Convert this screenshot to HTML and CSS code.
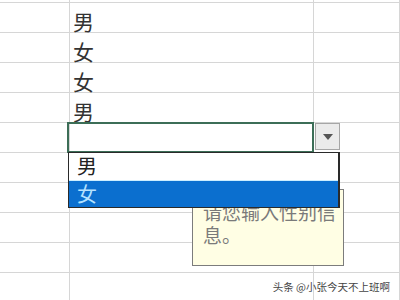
FILE: index.html
```html
<!DOCTYPE html>
<html lang="zh-CN">
  <head>
    <meta charset="UTF-8" />
    <meta name="viewport" content="width=device-width, initial-scale=1.0" />
    <title>数据验证</title>
    <link rel="stylesheet" href="styles.css">
  </head>

  <body>
    <div class="sheet">
      <div class="cell"></div><div class="cell"></div><div class="cell"></div>
      <div class="cell"></div><div class="cell">男</div><div class="cell"></div>
      <div class="cell"></div><div class="cell">女</div><div class="cell"></div>
      <div class="cell"></div><div class="cell">女</div><div class="cell"></div>
      <div class="cell"></div><div class="cell">男</div><div class="cell"></div>
      <div class="cell"></div>
      <div class="cell active">
        <div class="drop-btn"><span class="arrow"></span></div>
        <ul class="drop-list">
          <li>男</li>
          <li class="selected">女</li>
        </ul>
        <div class="tip">请您输入性别信息。</div>
      </div>
      <div class="cell"></div>
      <div class="cell"></div><div class="cell"></div><div class="cell"></div>
      <div class="cell"></div><div class="cell"></div><div class="cell"></div>
      <div class="cell"></div><div class="cell"></div><div class="cell"></div>
      <div class="cell"></div><div class="cell"></div><div class="cell"></div>
      <div class="cell"></div><div class="cell"></div><div class="cell"></div>
    </div>

    <div class="watermark">头条 @小张今天不上班啊</div>
  </body>
</html>
```

FILE: styles.css
```css
body {
  margin: 0;
  background-color: #fff;
  font-family: "Noto Sans CJK SC", "Noto Sans", sans-serif;
  overflow: hidden;
  height: 300px;
  position: relative;
}

.sheet {
  display: grid;
  grid-template-columns: 70px 244px 1fr;
  grid-auto-rows: 30px;
  margin-top: -27px;
}

.cell {
  box-sizing: border-box;
  border-right: 1px solid #d6d6d6;
  border-bottom: 1px solid #d6d6d6;
  display: flex;
  align-items: flex-end;
  padding-left: 3px;
  font-size: 21px;
  line-height: 22px;
  color: #333;
}

.active {
  position: relative;
}

.active::after {
  content: "";
  position: absolute;
  left: -3px;
  top: -1px;
  right: -1px;
  bottom: -1px;
  border: 2px solid #3c6e57;
}

.drop-btn {
  position: absolute;
  left: calc(100% + 2px);
  top: 0;
  width: 25px;
  height: 27px;
  box-sizing: border-box;
  background-color: #ebebeb;
  border: 1px solid #a6a6a6;
  display: flex;
  align-items: center;
  justify-content: center;
}

.arrow {
  width: 0;
  height: 0;
  border-left: 5px solid transparent;
  border-right: 5px solid transparent;
  border-top: 6px solid #555;
}

.drop-list {
  position: absolute;
  left: -2px;
  top: 29px;
  width: 272px;
  margin: 0;
  padding: 0;
  list-style: none;
  box-sizing: border-box;
  background-color: #fff;
  border: 1px solid #2a2a2a;
  border-right-width: 2px;
  z-index: 3;
}

.drop-list li {
  height: 27px;
  padding-left: 8px;
  font-size: 20px;
  line-height: 26px;
  color: #222;
}

.drop-list .selected {
  background-color: #0b6fcf;
  color: #b4e2ff;
  border-top: 1px solid #cdeeff;
  height: 26px;
}

.tip {
  position: absolute;
  left: 122px;
  top: 66px;
  width: 152px;
  box-sizing: border-box;
  padding: 10px 2px 19px 10px;
  background-color: #fffee4;
  border: 1px solid #7c7c7c;
  font-size: 19px;
  line-height: 23px;
  color: #7a7a7a;
  z-index: 2;
}

.watermark {
  position: absolute;
  right: 10px;
  top: 280px;
  font-size: 10.5px;
  line-height: 14px;
  color: #444;
}
```
